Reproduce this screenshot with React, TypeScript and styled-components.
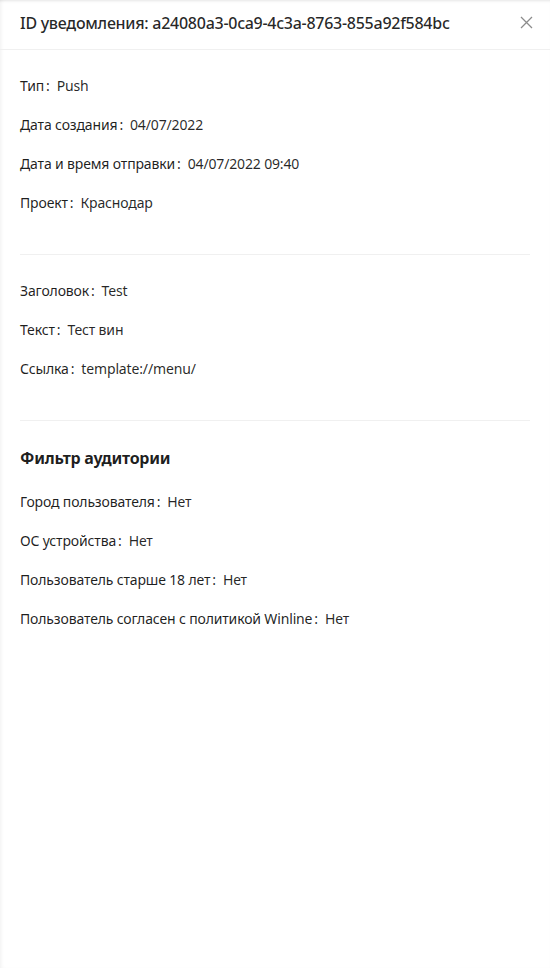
import React from "react";
import styled, { createGlobalStyle } from "styled-components";

const Global = createGlobalStyle`
  html, body { margin: 0; padding: 0; background: #fff; }
  body { font-family: "Noto Sans", "Open Sans", sans-serif; }
  * { box-sizing: border-box; }
`;

const Drawer = styled.div`
  width: 550px;
  height: 968px;
  background: #fff;
  display: flex;
  flex-direction: column;
  box-shadow: inset 3px 0 4px -2px rgba(0, 0, 0, 0.06), inset 0 3px 3px -2px rgba(0, 0, 0, 0.1);
  color: rgba(0, 0, 0, 0.85);
  font-size: 14px;
`;

const Header = styled.div`
  height: 50px;
  padding: 0 16px 0 20px;
  display: flex;
  align-items: center;
  justify-content: space-between;
  border-bottom: 1px solid #f0f0f0;
`;

const Title = styled.div`
  font-size: 16px;
  font-weight: 500;
  line-height: 22px;
  color: rgba(0, 0, 0, 0.85);
  letter-spacing: -0.27px;
  padding-bottom: 4px;
`;

const Close = styled.button`
  border: none;
  background: none;
  padding: 0;
  width: 16px;
  height: 16px;
  margin-bottom: 4px;
  display: flex;
  align-items: center;
  justify-content: center;
  color: rgba(0, 0, 0, 0.45);
  cursor: pointer;
`;

const Body = styled.div`
  padding: 25px 20px;
  flex: 1;
`;

const Section = styled.div``;

const SectionTitle = styled.div`
  font-size: 16px;
  font-weight: 700;
  line-height: 25px;
  margin: 2px 0 20px;
  color: rgba(0, 0, 0, 0.88);
  letter-spacing: -0.25px;
`;

const Row = styled.div`
  display: flex;
  align-items: baseline;
  line-height: 22px;
  padding-bottom: 17px;
`;

const Label = styled.span`
  color: rgba(0, 0, 0, 0.88);
  letter-spacing: -0.15px;
  &::after {
    content: ":";
    margin: 0 7px 0 2px;
  }
`;

const Value = styled.span`
  color: rgba(0, 0, 0, 0.85);
  letter-spacing: -0.15px;
`;

const Divider = styled.div`
  height: 1px;
  background: #f0f0f0;
  margin: 23px 0 25px;
`;

type Item = [string, string];

const general: Item[] = [
  ["Тип", "Push"],
  ["Дата создания", "04/07/2022"],
  ["Дата и время отправки", "04/07/2022 09:40"],
  ["Проект", "Краснодар"],
];

const content: Item[] = [
  ["Заголовок", "Test"],
  ["Текст", "Тест вин"],
  ["Ссылка", "template://menu/"],
];

const filter: Item[] = [
  ["Город пользователя", "Нет"],
  ["ОС устройства", "Нет"],
  ["Пользователь старше 18 лет", "Нет"],
  ["Пользователь согласен с политикой Winline", "Нет"],
];

const Rows = ({ items }: { items: Item[] }) => (
  <>
    {items.map(([l, v]) => (
      <Row key={l}>
        <Label>{l}</Label>
        <Value>{v}</Value>
      </Row>
    ))}
  </>
);

export default function App() {
  return (
    <>
      <Global />
      <Drawer>
        <Header>
          <Title>ID уведомления: a24080a3-0ca9-4c3a-8763-855a92f584bc</Title>
          <Close aria-label="Закрыть">
            <svg width="13" height="13" viewBox="0 0 13 13" fill="none">
              <path d="M1 1L12 12M12 1L1 12" stroke="currentColor" strokeWidth="1.3" />
            </svg>
          </Close>
        </Header>
        <Body>
          <Section>
            <Rows items={general} />
          </Section>
          <Divider />
          <Section>
            <Rows items={content} />
          </Section>
          <Divider />
          <Section>
            <SectionTitle>Фильтр аудитории</SectionTitle>
            <Rows items={filter} />
          </Section>
        </Body>
      </Drawer>
    </>
  );
}
